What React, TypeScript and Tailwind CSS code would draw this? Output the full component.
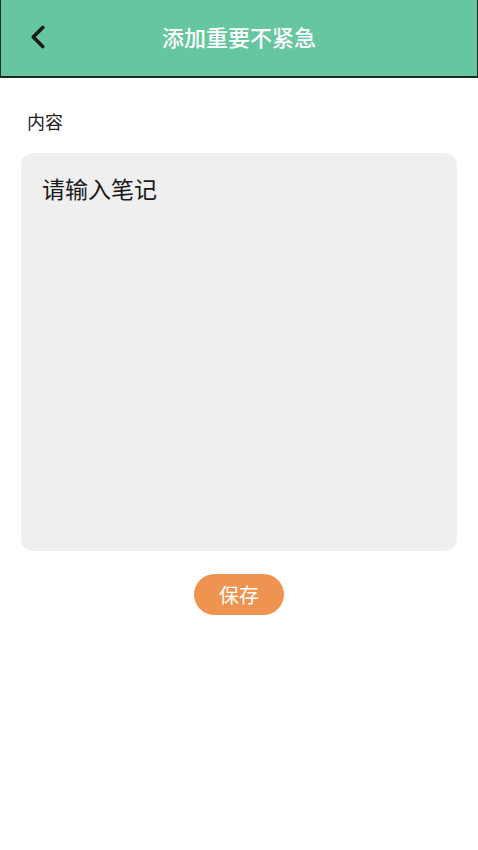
import { ChevronLeft } from "lucide-react";

const font = { fontFamily: "'Noto Sans CJK SC', 'Noto Sans', sans-serif" };

export default function App() {
  return (
    <div className="min-h-[850px] w-[478px] bg-white" style={font}>
      {/* Header */}
      <header className="relative flex h-[78px] items-center justify-center border-x border-b-2 border-[#1d2a24] bg-[#66c69f] pb-[4px]">
        <button className="absolute left-[18px] top-[18px] text-[#1b1b1b]">
          <ChevronLeft className="h-[38px] w-[38px]" strokeWidth={2.3} />
        </button>
        <h1 className="text-[22px] font-medium text-white">添加重要不紧急</h1>
      </header>

      <main className="px-[21px]">
        <div className="pl-[6px] pt-[31px] text-[18px] leading-[24px] text-[#222]">内容</div>

        <textarea
          placeholder="请输入笔记"
          className="mt-[20px] h-[398px] w-[436px] resize-none rounded-[12px] bg-[#efefef] px-[21px] py-[18px] text-[23px] leading-[34px] text-[#1a1a1a] outline-none placeholder:text-[#1a1a1a]"
          style={font}
        />

        <div className="mt-[18px] flex justify-center">
          <button className="h-[41px] w-[90px] rounded-full bg-[#ef9450] text-[20px] text-white">
            保存
          </button>
        </div>
      </main>
    </div>
  );
}
